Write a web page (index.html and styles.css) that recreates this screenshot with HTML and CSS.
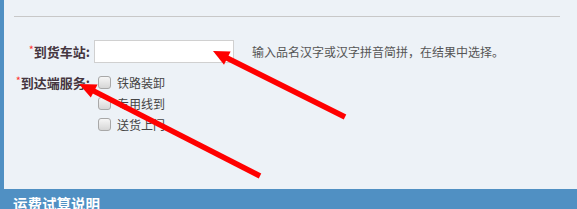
FILE: index.html
```html
<!DOCTYPE html>
<html lang="zh">
<head>
<meta charset="utf-8">
<link rel="stylesheet" href="styles.css">
</head>
<body>
<div class="page">
  <div class="panel">
    <div class="rule"></div>
    <div class="row station">
      <label class="label"><span class="req">*</span>到货车站:</label>
      <input class="field" type="text">
      <span class="hint">输入品名汉字或汉字拼音简拼，在结果中选择。</span>
    </div>
    <div class="row service">
      <label class="label"><span class="req">*</span>到达端服务:</label>
      <div class="options">
        <label class="opt"><input type="checkbox" class="cb"><span>铁路装卸</span></label>
        <label class="opt"><input type="checkbox" class="cb"><span>专用线到</span></label>
        <label class="opt"><input type="checkbox" class="cb"><span>送货上门</span></label>
      </div>
    </div>
  </div>
  <div class="bar">运费试算说明</div>
  <svg class="arrows" width="577" height="209" viewBox="0 0 577 209">
    <line x1="345" y1="117" x2="226" y2="57.5" stroke="#ff0000" stroke-width="5.5"/>
    <polygon points="213,51 230.6,51.6 224,64.8" fill="#ff0000"/>
    <line x1="260" y1="176" x2="93" y2="90.6" stroke="#ff0000" stroke-width="5.5"/>
    <polygon points="79,84 97.6,84.6 90.8,97.6" fill="#ff0000"/>
  </svg>
</div>
</body>
</html>
```
FILE: styles.css
```css
html, body {
  margin: 0;
  padding: 0;
}
body {
  width: 577px;
  height: 209px;
  overflow: hidden;
  background: #5090c3;
  font-family: "Noto Sans CJK SC", "Noto Sans", sans-serif;
}
.page {
  position: relative;
  width: 577px;
  height: 209px;
}
.panel {
  box-sizing: border-box;
  height: 189px;
  background: #edf2f7;
  border-left: 4px solid #5090c3;
  padding-top: 16px;
}
.rule {
  margin-left: 10px;
  width: 546px;
  height: 1px;
  background: #c8c8c8;
}
.row {
  display: flex;
}
.station {
  margin-top: 23px;
  align-items: center;
  height: 23px;
}
.service {
  margin-top: 9px;
  align-items: flex-start;
}
.label {
  box-sizing: border-box;
  width: 90px;
  flex: none;
  text-align: right;
  padding-right: 4px;
  font-size: 13px;
  font-weight: bold;
  color: #45363f;
  line-height: 21px;
  white-space: nowrap;
}
.req {
  color: #ff3333;
  font-weight: normal;
  font-size: 11px;
  vertical-align: top;
  position: relative;
  top: -2px;
}
.field {
  box-sizing: border-box;
  width: 140px;
  height: 23px;
  margin: 0;
  border: 1px solid #d0d0d0;
  background: #fff;
  flex: none;
}
.hint {
  margin-left: 18px;
  font-size: 12px;
  color: #555;
  white-space: nowrap;
}
.options {
  display: flex;
  flex-direction: column;
}
.opt {
  display: flex;
  align-items: center;
  height: 21px;
  font-size: 12px;
  color: #444;
}
.cb {
  appearance: none;
  -webkit-appearance: none;
  box-sizing: border-box;
  width: 13px;
  height: 13px;
  margin: 0 6px 0 4px;
  border: 1px solid #a8a8a8;
  border-radius: 3px;
  background: linear-gradient(#f6f6f6, #d6d6d6);
}
.bar {
  box-sizing: border-box;
  height: 20px;
  padding: 5px 0 0 13px;
  font-size: 14.5px;
  font-weight: bold;
  color: #fff;
  line-height: 20px;
  white-space: nowrap;
}
.arrows {
  position: absolute;
  left: 0;
  top: 0;
  pointer-events: none;
}
```
